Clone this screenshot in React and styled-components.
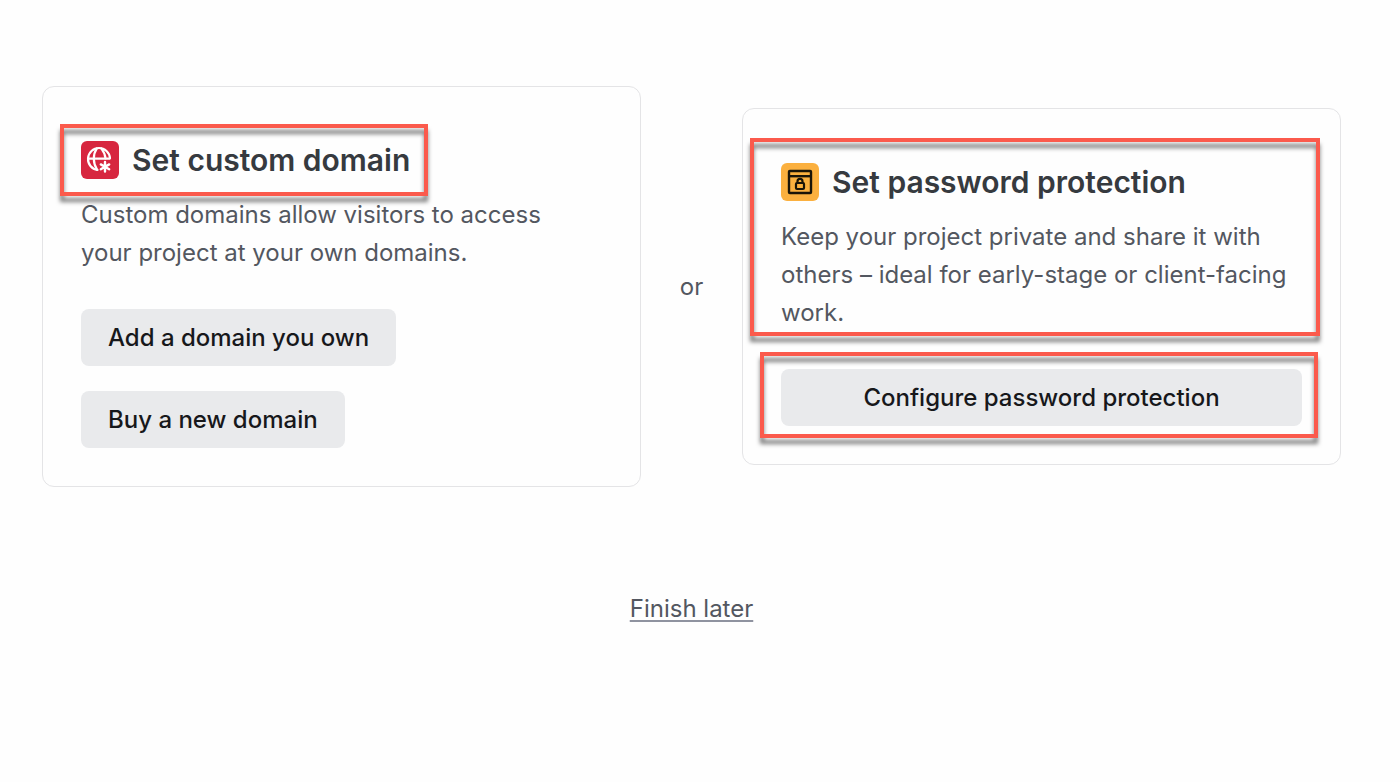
import React from 'react';
import styled, { createGlobalStyle } from 'styled-components';

const GlobalStyle = createGlobalStyle`
  * {
    box-sizing: border-box;
  }
  body {
    margin: 0;
    background: #fefefe;
    color: #535760;
    font-family: Inter, 'Liberation Sans', sans-serif;
    font-size: 24px;
    line-height: 38px;
  }
`;

const Page = styled.main`
  display: flex;
  flex-direction: column;
  align-items: center;
  gap: 103px;
  padding: 86px 59px 86px 42px;
`;

const Options = styled.div`
  display: grid;
  grid-template-columns: minmax(0, 1fr) 101px minmax(0, 1fr);
  align-items: center;
  width: 100%;
`;

const Card = styled.section`
  display: flex;
  flex-direction: column;
  gap: 37px;
  padding: 54px 38px 38px;
  border: 1px solid #e4e4e6;
  border-radius: 12px;
`;

const Intro = styled.div`
  position: relative;
  display: flex;
  flex-direction: column;
  align-items: flex-start;
  gap: 17px;
`;

const Heading = styled.div`
  position: relative;
  display: flex;
  align-items: center;
  gap: 13px;
`;

const Title = styled.h2`
  margin: 0;
  color: #363a3f;
  font-size: 30px;
  font-weight: 600;
  line-height: 38px;
`;

const IconTile = styled.span`
  display: flex;
  flex: none;
  width: 38px;
  height: 38px;
  border-radius: 6px;
  background: ${({ $tone }) => $tone};
`;

const Text = styled.p`
  margin: 0;
  max-width: 512px;
`;

const Actions = styled.div`
  position: relative;
  display: flex;
  flex-direction: column;
  align-items: ${({ $stretch }) => ($stretch ? 'stretch' : 'flex-start')};
  gap: 25px;
`;

const Button = styled.button`
  height: 57px;
  padding: 0 27px;
  border: 0;
  border-radius: 8px;
  background: #e9eaec;
  color: #17181b;
  font: inherit;
  font-weight: 500;
  cursor: pointer;
`;

const Or = styled.span`
  text-align: center;
`;

const LaterLink = styled.a`
  color: inherit;
  text-decoration: underline;
  text-decoration-color: #8f93a0;
  text-decoration-thickness: 2px;
  text-underline-offset: 3px;
`;

// Callout frame drawn over the block it sits in
const Highlight = styled.span`
  position: absolute;
  inset: ${({ $inset }) => $inset};
  border: 4px solid #fb5a4c;
  filter: drop-shadow(0 6px 2px rgba(0, 0, 0, 0.5));
  pointer-events: none;
`;

const GlobeIcon = () => (
  <svg width="38" height="38" viewBox="0 0 38 38" fill="none" stroke="#fff" strokeWidth="2.2" strokeLinecap="round" aria-hidden="true">
    <path d="M29 17.2A11 11 0 1 0 16.5 28.9" />
    <path d="M7.2 17.6h21.600" />
    <path d="M15.8 7.400C11.800 13.500 11.800 22 16 28.600M20.300 7.400C23 11 24.300 14 24.500 17.500" />
    <path d="M24 21v9.600M19.800 23.400l8.400 4.800M28.200 23.400l-8.400 4.800" strokeWidth="2.400" />
  </svg>
);

const LockWindowIcon = () => (
  <svg width="38" height="38" viewBox="0 0 38 38" fill="none" stroke="#1a1408" strokeWidth="2.4" strokeLinejoin="round" aria-hidden="true">
    <rect x="8" y="8" width="22" height="22" rx="0.8" />
    <path d="M8 13.2h22" />
    <rect x="15" y="20" width="8" height="6" rx="1" strokeWidth="2.2" />
    <path d="M16.5 20v-1.6a2.5 2.5 0 0 1 5 0V20" strokeWidth="2.2" />
  </svg>
);

export default function App() {
  return (
    <>
      <GlobalStyle />
      <Page>
        <Options>
          <Card>
            <Intro>
              <Heading>
                <IconTile $tone="#d7263f">
                  <GlobeIcon />
                </IconTile>
                <Title>Set custom domain</Title>
                <Highlight $inset="-17px -18px -17px -21px" />
              </Heading>
              <Text>Custom domains allow visitors to access your project at your own domains.</Text>
            </Intro>
            <Actions>
              <Button type="button">Add a domain you own</Button>
              <Button type="button">Buy a new domain</Button>
            </Actions>
          </Card>
          <Or>or</Or>
          <Card>
            <Intro>
              <Heading>
                <IconTile $tone="#fbb03f">
                  <LockWindowIcon />
                </IconTile>
                <Title>Set password protection</Title>
              </Heading>
              <Text>
                Keep your project private and share it with others – ideal for early-stage or client-facing work.
              </Text>
              <Highlight $inset="-25px -18px -4px -31px" />
            </Intro>
            <Actions $stretch>
              <Button type="button">Configure password protection</Button>
              <Highlight $inset="-17px -16px -12px -21px" />
            </Actions>
          </Card>
        </Options>
        <LaterLink href="#">Finish later</LaterLink>
      </Page>
    </>
  );
}
